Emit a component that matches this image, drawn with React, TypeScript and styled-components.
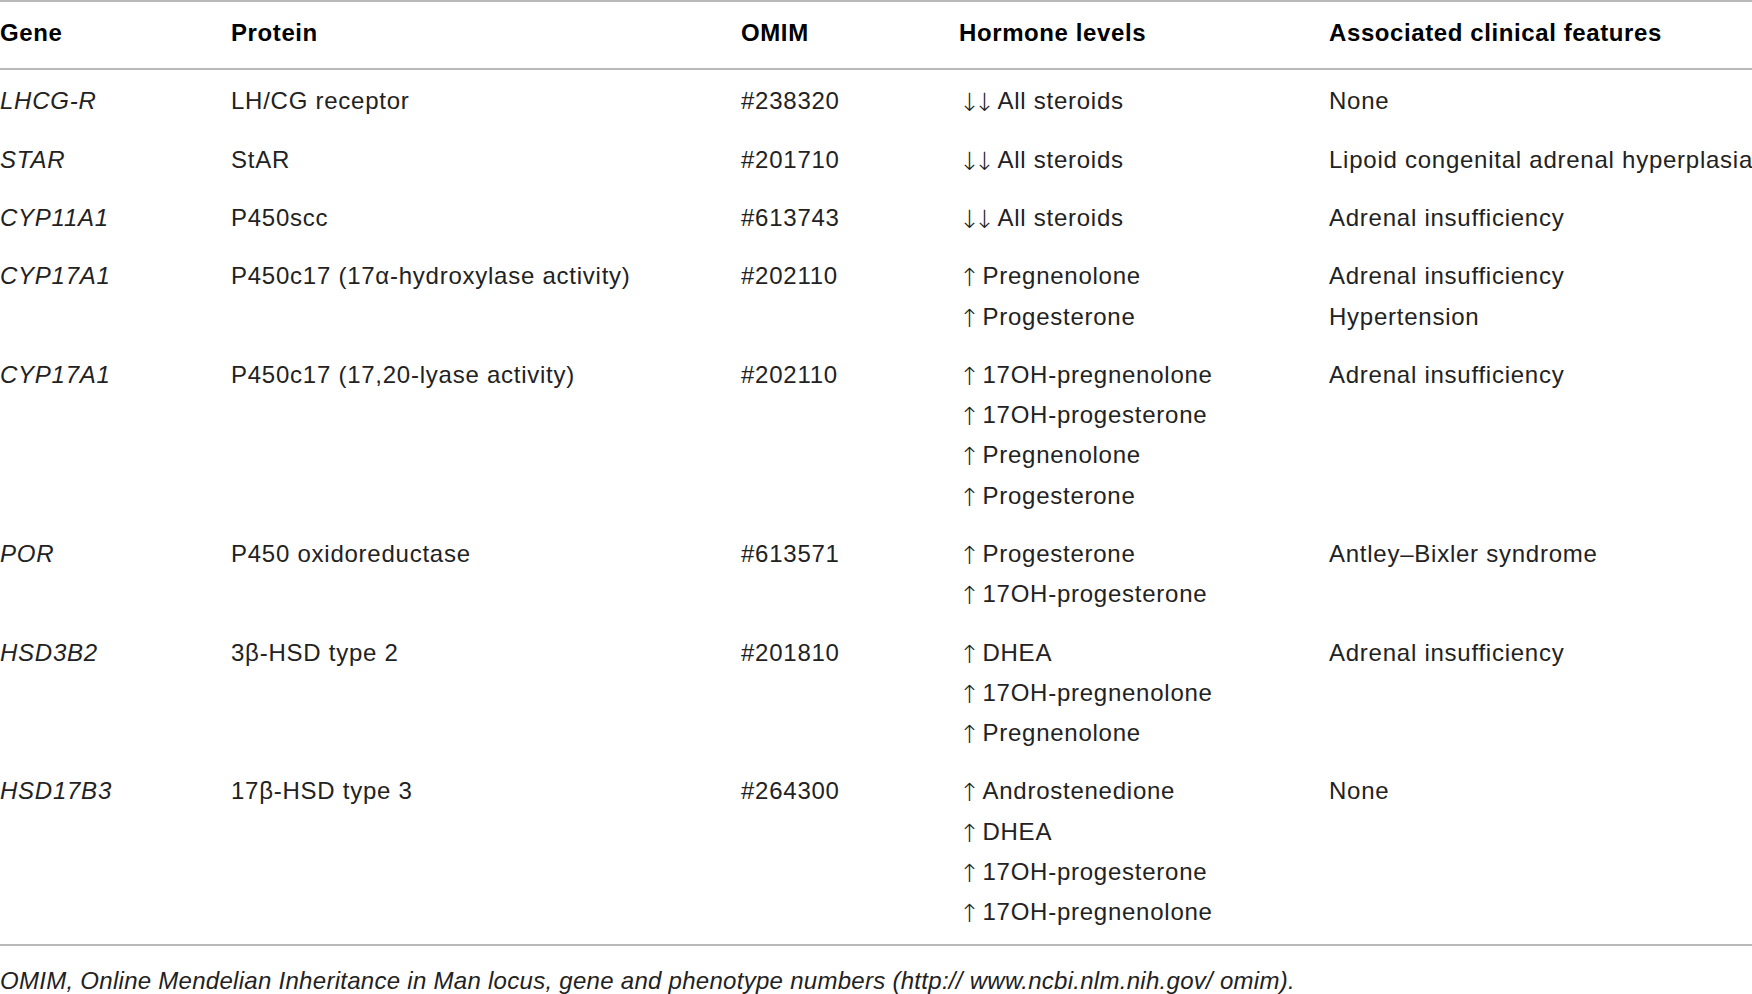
import React, { FC } from "react";
import styled, { createGlobalStyle } from "styled-components";

const GlobalStyle = createGlobalStyle`
  html, body {
    margin: 0;
    padding: 0;
    background: #ffffff;
    overflow: hidden;
  }
  body {
    font-family: "Liberation Sans", Arial, sans-serif;
    color: #222222;
  }
`;

type Dir = "up" | "down2";

interface Level {
  dir: Dir;
  text: string;
}

interface GeneRow {
  gene: string;
  protein: string;
  omim: string;
  hormones: Level[];
  features: string[];
}

const up = (text: string): Level => ({ dir: "up", text });
const down = (text: string): Level => ({ dir: "down2", text });

const rows: GeneRow[] = [
  {
    gene: "LHCG-R",
    protein: "LH/CG receptor",
    omim: "#238320",
    hormones: [down("All steroids")],
    features: ["None"],
  },
  {
    gene: "STAR",
    protein: "StAR",
    omim: "#201710",
    hormones: [down("All steroids")],
    features: ["Lipoid congenital adrenal hyperplasia"],
  },
  {
    gene: "CYP11A1",
    protein: "P450scc",
    omim: "#613743",
    hormones: [down("All steroids")],
    features: ["Adrenal insufficiency"],
  },
  {
    gene: "CYP17A1",
    protein: "P450c17 (17α-hydroxylase activity)",
    omim: "#202110",
    hormones: [up("Pregnenolone"), up("Progesterone")],
    features: ["Adrenal insufficiency", "Hypertension"],
  },
  {
    gene: "CYP17A1",
    protein: "P450c17 (17,20-lyase activity)",
    omim: "#202110",
    hormones: [
      up("17OH-pregnenolone"),
      up("17OH-progesterone"),
      up("Pregnenolone"),
      up("Progesterone"),
    ],
    features: ["Adrenal insufficiency"],
  },
  {
    gene: "POR",
    protein: "P450 oxidoreductase",
    omim: "#613571",
    hormones: [up("Progesterone"), up("17OH-progesterone")],
    features: ["Antley–Bixler syndrome"],
  },
  {
    gene: "HSD3B2",
    protein: "3β-HSD type 2",
    omim: "#201810",
    hormones: [up("DHEA"), up("17OH-pregnenolone"), up("Pregnenolone")],
    features: ["Adrenal insufficiency"],
  },
  {
    gene: "HSD17B3",
    protein: "17β-HSD type 3",
    omim: "#264300",
    hormones: [
      up("Androstenedione"),
      up("DHEA"),
      up("17OH-progesterone"),
      up("17OH-pregnenolone"),
    ],
    features: ["None"],
  },
];

const Page = styled.div`
  width: 1752px;
  height: 994px;
  overflow: hidden;
`;

const Table = styled.div`
  border-top: 2px solid #b9b9b9;
  border-bottom: 2px solid #b9b9b9;
  padding-bottom: 3px;
`;

const Row = styled.div<{ $head?: boolean }>`
  display: grid;
  grid-template-columns: 231px 510px 218px 370px 1fr;
  padding: ${(p) => (p.$head ? "11px 0 15px" : "9.1px 0")};
  border-bottom: ${(p) => (p.$head ? "2px solid #b9b9b9" : "none")};
  margin-bottom: ${(p) => (p.$head ? "2px" : "0")};
`;

const HeadCell = styled.div`
  font-size: 24px;
  line-height: 40.2px;
  font-weight: 700;
  color: #000;
  letter-spacing: 0.6px;
  white-space: nowrap;
`;

const Cell = styled.div<{ $italic?: boolean }>`
  font-size: 24px;
  line-height: 40.2px;
  font-style: ${(p) => (p.$italic ? "italic" : "normal")};
  letter-spacing: 0.75px;
  white-space: nowrap;
`;

const Line = styled.div``;

const Arrow = styled.span`
  font-family: "DejaVu Sans", sans-serif;
  font-weight: 200;
  font-size: 25px;
  letter-spacing: -6px;
  margin-right: 8.5px;
  position: relative;
  top: 2px;
`;

const Footnote = styled.p`
  margin: 0;
  padding-top: 21px;
  font-size: 24px;
  line-height: 28px;
  font-style: italic;
  letter-spacing: 0.28px;
  white-space: nowrap;
`;

const App: FC = () => {
  return (
    <Page>
      <GlobalStyle />
      <Table>
        <Row $head>
          <HeadCell>Gene</HeadCell>
          <HeadCell>Protein</HeadCell>
          <HeadCell>OMIM</HeadCell>
          <HeadCell>Hormone levels</HeadCell>
          <HeadCell>Associated clinical features</HeadCell>
        </Row>
        {rows.map((r, i) => (
          <Row key={i}>
            <Cell $italic>{r.gene}</Cell>
            <Cell>{r.protein}</Cell>
            <Cell>{r.omim}</Cell>
            <Cell>
              {r.hormones.map((h) => (
                <Line key={h.text}>
                  <Arrow>{h.dir === "up" ? "↑" : "↓↓"}</Arrow>
                  {h.text}
                </Line>
              ))}
            </Cell>
            <Cell>
              {r.features.map((f) => (
                <Line key={f}>{f}</Line>
              ))}
            </Cell>
          </Row>
        ))}
      </Table>
      <Footnote>
        OMIM, Online Mendelian Inheritance in Man locus, gene and phenotype
        numbers (http:// www.ncbi.nlm.nih.gov/ omim).
      </Footnote>
    </Page>
  );
};

export default App;
